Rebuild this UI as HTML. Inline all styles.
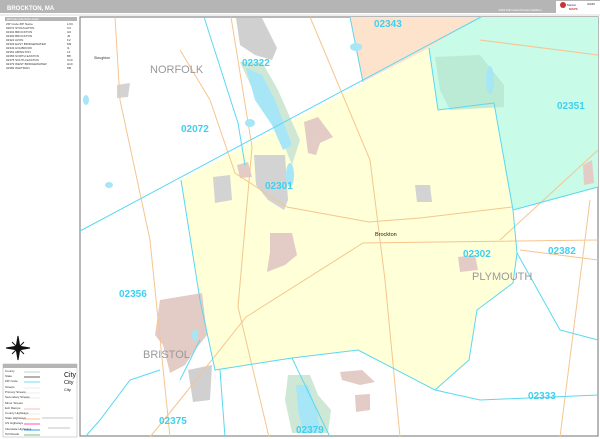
<!DOCTYPE html>
<html><head><meta charset="utf-8"><style>
html,body{margin:0;padding:0;background:#fff;width:600px;height:439px;overflow:hidden;font-family:"Liberation Sans",sans-serif}
svg{display:block}
.z{fill:#3fd0f0;font-weight:bold;font-size:10px;font-family:"Liberation Sans",sans-serif}
.c{fill:#999;font-size:11px;font-family:"Liberation Sans",sans-serif}
.t{font-size:3px;fill:#333;font-family:"Liberation Sans",sans-serif}
</style></head><body>
<svg width="600" height="439" viewBox="0 0 600 439" xmlns="http://www.w3.org/2000/svg">
<rect x="0" y="0" width="600" height="13" fill="#b5b5b5"/>
<text x="7" y="10" fill="#fff" font-size="6" font-weight="bold" font-family="Liberation Sans">BROCKTON, MA</text>
<text x="520" y="11" fill="#fff" font-size="3" text-anchor="middle" font-family="Liberation Sans">2024 ZIP Code Premium Edition</text>
<rect x="556" y="1" width="44" height="12" fill="#fff"/>
<circle cx="563" cy="5" r="3" fill="#c33"/>
<text x="567" y="6" font-size="3" fill="#339" font-family="Liberation Sans">Market</text>
<text x="569" y="10" font-size="3" fill="#c33" font-weight="bold" font-family="Liberation Sans">MAPS</text>
<text x="587" y="5" font-size="2.5" fill="#333" font-family="Liberation Sans">ADMIN</text>
<rect x="0" y="14" width="600" height="2" fill="#eee"/>
<rect x="80" y="17" width="518" height="419" fill="#fff" stroke="#888" stroke-width="1.2"/>
<!-- regions -->
<polygon points="350,17 479,17 429,48 363,82 358,60" fill="#fde3cc"/>
<polygon points="429,48 479,17 598,17 598,187 513,210 494,103 438,110" fill="#c8fbe8"/>
<polygon points="181,180 429,48 438,110 494,103 513,210 517,253 513,283 477,310 469,360 435,390 358,350 292,358 215,370 200,300" fill="#ffffd8"/>
<!-- blobs -->
<polygon points="160,300 202,293 207,335 195,350 185,365 170,373 163,345 155,335" fill="#e3cbc6"/>
<polygon points="288,375 310,375 318,395 331,410 328,433 292,433 285,400" fill="#cfe8d6"/>
<polygon points="296,385 308,385 318,415 320,433 303,433 298,410" fill="#a6e6f7"/>
<polygon points="240,62 262,62 278,90 300,140 292,165 282,140 262,110" fill="#cfe8d6"/>
<polygon points="246,68 262,75 275,100 292,145 283,150 272,125 255,100" fill="#a6e6f7"/>
<polygon points="236,18 262,18 277,48 272,60 255,55 240,45" fill="#d0d0d0"/>
<polygon points="254,155 285,155 288,200 284,210 268,200 256,185" fill="#d3d3d3"/>
<polygon points="213,177 230,175 232,200 215,203" fill="#d3d3d3"/>
<polygon points="304,122 318,117 333,137 320,143 316,155 308,153" fill="#e3cbc6"/>
<polygon points="270,233 292,233 297,255 285,265 267,272 270,252" fill="#e3cbc6"/>
<polygon points="237,165 248,162 252,177 240,178" fill="#e3cbc6"/>
<polygon points="458,257 475,255 478,270 460,272" fill="#e3cbc6"/>
<polygon points="340,372 362,370 375,382 360,385 342,380" fill="#e3cbc6"/>
<polygon points="355,395 370,394 370,410 356,412" fill="#e3cbc6"/>
<polygon points="188,370 212,365 210,400 193,402" fill="#d0d0d0"/>
<polygon points="435,57 480,55 504,85 504,107 450,110 440,90" fill="#b8e6cf" opacity=".8"/>
<polygon points="415,185 430,185 432,202 417,202" fill="#d3d3d3"/>
<polygon points="117,85 130,83 128,97 117,98" fill="#d3d3d3"/>
<polygon points="583,165 592,160 594,183 584,185" fill="#e3cbc6"/>
<!-- roads -->
<g fill="none" stroke="#f6c58f" stroke-width="1">
<path d="M231,17 L252,147 L238,307 L269,437"/>
<path d="M180,50 L210,100 L235,173 L287,207 L369,222 L420,218 L512,207"/>
<path d="M246,317 L363,243 L440,242 L598,240"/>
<path d="M310,17 L370,160 L385,280 L400,437"/>
<path d="M115,17 L120,100 L150,240 L170,437"/>
<path d="M500,240 L598,150"/>
<path d="M520,250 L598,260"/>
<path d="M480,40 L598,55"/>
<path d="M150,437 L180,400 L246,317"/>
<path d="M590,200 L560,437"/>
</g>
<g fill="none" stroke="#5ad8f0" stroke-width="1">
<path d="M80,231 L481,17"/>
<path d="M181,180 L200,300 L215,370 L292,358 L358,350 L435,390 L469,360 L477,310 L513,283 L517,253 L513,210 L494,103 L438,110 L429,48"/>
<path d="M513,210 L598,187"/>
<path d="M517,253 L560,330 L598,340"/>
<path d="M350,17 L363,82"/>
<path d="M204,17 L238,123 L245,165"/>
<path d="M160,370 L130,380 L100,420 L85,437"/>
<path d="M200,340 L180,380"/>
<path d="M292,358 L330,437"/>
<path d="M220,370 L225,437"/>
<path d="M435,390 L480,400 L598,395"/>
</g>
<g fill="#a6e6f7">
<ellipse cx="356" cy="47" rx="6" ry="4"/><ellipse cx="250" cy="123" rx="5" ry="4"/><ellipse cx="86" cy="100" rx="3" ry="5"/>
<ellipse cx="109" cy="185" rx="4" ry="3"/><ellipse cx="290" cy="175" rx="4" ry="12"/><ellipse cx="195" cy="335" rx="3" ry="6"/>
<ellipse cx="490" cy="80" rx="4" ry="14"/>
</g>
<text class="z" x="374" y="27">02343</text>
<text class="z" x="242" y="66">02322</text>
<text class="z" x="557" y="109">02351</text>
<text class="z" x="181" y="132">02072</text>
<text class="z" x="265" y="189">02301</text>
<text class="z" x="463" y="257">02302</text>
<text class="z" x="548" y="254">02382</text>
<text class="z" x="119" y="297">02356</text>
<text class="z" x="528" y="399">02333</text>
<text class="z" x="159" y="424">02375</text>
<text class="z" x="296" y="433">02379</text>
<text class="c" x="150" y="73">NORFOLK</text>
<text class="c" x="472" y="280">PLYMOUTH</text>
<text class="c" x="143" y="358">BRISTOL</text>
<text x="375" y="236" font-size="5.5" fill="#222" font-family="Liberation Sans">Brockton</text>
<text x="94" y="59" font-size="3.5" fill="#333" font-family="Liberation Sans">Stoughton</text>
<rect x="5" y="17" width="72" height="4" fill="#b5b5b5"/>
<text x="7" y="20" font-size="2.5" fill="#fff" font-family="Liberation Sans">ZIP Code Index/Grid Locator</text>
<g class="t">
<text x="6" y="25">ZIP Code  ZIP Name</text><text x="67" y="25">LOC</text>
<text x="6" y="29">02072     STOUGHTON</text><text x="67" y="29">C4</text>
<text x="6" y="33">02301     BROCKTON</text><text x="67" y="33">G6</text>
<text x="6" y="37">02302     BROCKTON</text><text x="67" y="37">J6</text>
<text x="6" y="41">02322     AVON</text><text x="67" y="41">F2</text>
<text x="6" y="45">02333     EAST BRIDGEWATER</text><text x="67" y="45">M9</text>
<text x="6" y="49">02343     HOLBROOK</text><text x="67" y="49">I1</text>
<text x="6" y="53">02351     ABINGTON</text><text x="67" y="53">L3</text>
<text x="6" y="57">02356     NORTH EASTON</text><text x="67" y="57">B8</text>
<text x="6" y="61">02375     SOUTH EASTON</text><text x="67" y="61">C10</text>
<text x="6" y="65">02379     WEST BRIDGEWATER</text><text x="67" y="65">H10</text>
<text x="6" y="69">02382     WHITMAN</text><text x="67" y="69">M6</text>
</g>
<g transform="translate(18,348)" stroke="#111" fill="#111">
<path d="M0,-12 L2,0 L0,12 L-2,0Z"/><path d="M-12,0 L0,-2 L12,0 L0,2Z"/>
<path d="M-6,-6 L6,6 M6,-6 L-6,6" stroke-width="1"/>
</g>
<rect x="3" y="364" width="74" height="73" fill="#fff" stroke="#bbb" stroke-width=".6"/>
<rect x="3" y="364" width="74" height="4" fill="#b5b5b5"/>
<g stroke-width="1" fill="none">
<path d="M24,372 L40,372" stroke="#ccc"/><path d="M24,377 L40,377" stroke="#666"/>
<path d="M24,382 L40,382" stroke="#6ee0f5"/><path d="M24,388 L40,388" stroke="#eee"/>
<path d="M24,393 L40,393" stroke="#eee"/><path d="M24,398 L40,398" stroke="#eee"/>
<path d="M24,409 L40,409" stroke="#fbb"/><path d="M24,414 L40,414" stroke="#eee"/>
<path d="M24,419 L40,419" stroke="#f6c58f"/><path d="M24,424 L40,424" stroke="#f5a"/>
<path d="M24,430 L40,430" stroke="#39e"/><path d="M24,435 L40,435" stroke="#6c6"/>
<path d="M42,418 L73,418 M48,428 L70,428" stroke="#888" stroke-width=".5"/>
</g>
<g class="t" font-size="2.5"><text x="5" y="372">County</text><text x="5" y="377">State</text><text x="5" y="382">ZIP Code</text><text x="5" y="388">Streets</text><text x="5" y="393">Primary Streets</text><text x="5" y="398">Secondary Streets</text><text x="5" y="404">Minor Streets</text><text x="5" y="409">Exit Ramps</text><text x="5" y="414">County Highways</text><text x="5" y="419">State Highways</text><text x="5" y="424">US Highways</text><text x="5" y="430">Interstate Highways</text><text x="5" y="435">Toll Roads</text></g>
<text x="64" y="377" font-size="7" fill="#111" font-family="Liberation Sans">City</text>
<text x="64" y="384" font-size="5.5" fill="#111" font-family="Liberation Sans">City</text>
<text x="64" y="391" font-size="4" fill="#111" font-family="Liberation Sans">City</text>
</svg>
</body></html>
